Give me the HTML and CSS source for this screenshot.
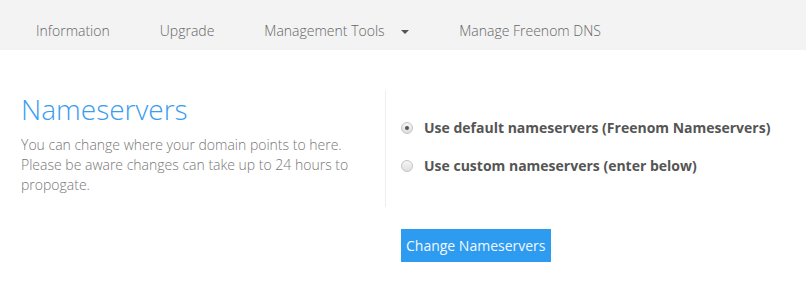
FILE: index.html
```html
<!DOCTYPE html>
<html lang="en">
<head>
    <meta charset="UTF-8">
    <meta name="viewport" content="width=device-width, initial-scale=1.0">
    <title>Nameservers</title>
    <link rel="stylesheet" href="styles.css">
</head>
<body>
    <nav class="tabs">
        <a class="tab" href="#">Information</a>
        <a class="tab" href="#">Upgrade</a>
        <a class="tab tab-dropdown" href="#">Management Tools <span class="caret"></span></a>
        <a class="tab" href="#">Manage Freenom DNS</a>
    </nav>

    <form class="ns-panel">
        <div class="ns-intro">
            <h2 class="ns-title">Nameservers</h2>
            <p class="ns-text">You can change where your domain points to here. Please be aware changes can take up to 24 hours to propogate.</p>
        </div>

        <div class="ns-options">
            <label class="ns-option">
                <input type="radio" name="nsmode" value="default" checked>
                <span>Use default nameservers (Freenom Nameservers)</span>
            </label>
            <label class="ns-option">
                <input type="radio" name="nsmode" value="custom">
                <span>Use custom nameservers (enter below)</span>
            </label>
        </div>

        <div class="ns-actions">
            <button type="submit" class="ns-button">Change Nameservers</button>
        </div>
    </form>
</body>
</html>
```

FILE: styles.css
```css
body {
    font-family: 'Open Sans', 'Liberation Sans', sans-serif;
    background-color: #fff;
    margin: 0;
    padding: 0;
    color: #555;
}

.tabs {
    display: flex;
    height: 50px;
    background-color: #f3f3f3;
    padding-left: 11px;
    box-sizing: border-box;
    padding-top: 20px;
}

.tab {
    display: block;
    padding: 0 25px;
    font-size: 14px;
    font-weight: 300;
    line-height: 22px;
    color: #666;
    text-decoration: none;
}

.caret {
    display: inline-block;
    width: 0;
    height: 0;
    margin-left: 13px;
    vertical-align: middle;
    border-left: 4px solid transparent;
    border-right: 4px solid transparent;
    border-top: 4px solid #555;
}

.ns-panel {
    display: grid;
    grid-template-columns: 386px 1fr;
    padding-top: 40px;
    margin: 0;
}

.ns-intro {
    padding-left: 21px;
    padding-right: 20px;
    border-right: 1px solid #eee;
    height: 117px;
}

.ns-title {
    margin: 0;
    font-size: 28px;
    font-weight: 300;
    color: #3a9cf0;
    line-height: 38px;
}

.ns-text {
    margin: 7px 0 0;
    font-size: 14px;
    font-weight: 300;
    line-height: 20px;
    color: #777;
}

.ns-options {
    padding-left: 15px;
    padding-top: 28px;
}

.ns-option {
    display: flex;
    align-items: center;
    font-size: 14px;
    font-weight: bold;
    color: #555;
    margin-bottom: 19px;
}

.ns-option input {
    appearance: none;
    -webkit-appearance: none;
    box-sizing: border-box;
    margin: 0 11px 0 0;
    width: 12px;
    height: 12px;
    border: 1px solid #c4c4c4;
    border-radius: 50%;
    background: linear-gradient(#f6f6f6, #dedede);
    position: relative;
}

.ns-option input:checked::after {
    content: '';
    position: absolute;
    left: 3px;
    top: 3px;
    width: 4px;
    height: 4px;
    border-radius: 50%;
    background-color: #555;
}

.ns-actions {
    grid-column: 2;
    padding-left: 15px;
    padding-top: 22px;
}

.ns-button {
    background-color: #2d9bef;
    color: #f2f8ff;
    border: none;
    font-family: inherit;
    font-size: 14px;
    padding: 0 5px;
    height: 33px;
    cursor: pointer;
}
```
